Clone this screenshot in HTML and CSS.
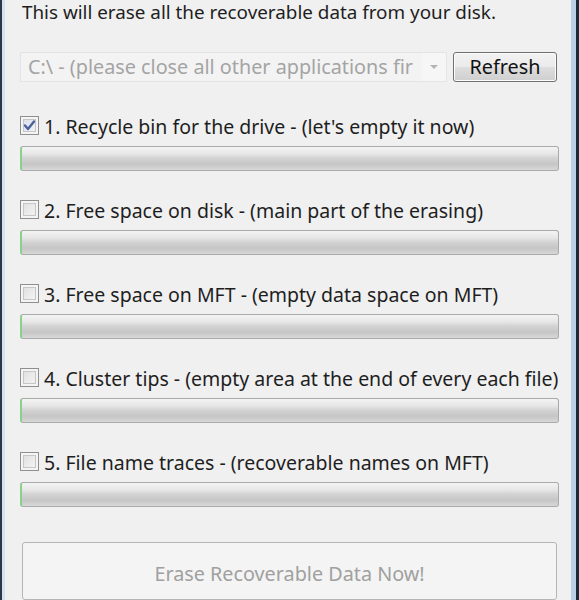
FILE: index.html
```html
<!DOCTYPE html>
<html>
<head>
<meta charset="utf-8">
<link rel="stylesheet" href="styles.css">
</head>
<body>
<div class="window">
  <div class="panel">
    <div class="intro">This will erase all the recoverable data from your disk.</div>
    <div class="drive-row">
      <div class="combo">
        <span class="combo-text">C:\ - (please close all other applications fir</span>
        <span class="combo-btn"><svg width="10" height="6" viewBox="0 0 10 6"><path d="M1 1 L9 1 L5 5 Z" fill="#b4b4b4"/></svg></span>
      </div>
      <div class="btn refresh">Refresh</div>
    </div>
    <div class="steps">
      <div class="step">
        <div class="check-line"><span class="box checked"><svg width="13" height="13" viewBox="0 0 13 13"><path d="M2 6.5 L5 10 L11 2.5" fill="none" stroke="#4b5f9a" stroke-width="2.4" stroke-linecap="round" stroke-linejoin="round"/></svg></span><span class="label">1. Recycle bin for the drive - (let's empty it now)</span></div>
        <div class="progress"></div>
      </div>
      <div class="step">
        <div class="check-line"><span class="box"></span><span class="label">2. Free space on disk - (main part of the erasing)</span></div>
        <div class="progress"></div>
      </div>
      <div class="step">
        <div class="check-line"><span class="box"></span><span class="label">3. Free space on MFT - (empty data space on MFT)</span></div>
        <div class="progress"></div>
      </div>
      <div class="step">
        <div class="check-line"><span class="box"></span><span class="label">4. Cluster tips - (empty area at the end of every each file)</span></div>
        <div class="progress"></div>
      </div>
      <div class="step">
        <div class="check-line"><span class="box"></span><span class="label">5. File name traces - (recoverable names on MFT)</span></div>
        <div class="progress"></div>
      </div>
    </div>
    <div class="btn erase">Erase Recoverable Data Now!</div>
  </div>
</div>
</body>
</html>
```
FILE: styles.css
```css
html, body {
  margin: 0;
  padding: 0;
  background: #f0f0f0;
}
body {
  font-family: "Noto Sans", "Open Sans", "DejaVu Sans", sans-serif;
  font-size: 19.5px;
  color: #1e1e1e;
}
.window {
  width: 579px;
  height: 600px;
  box-sizing: border-box;
  border-left: 2px solid #2a3846;
  border-right: 3px solid #1c2a38;
  overflow: hidden;
}
.panel {
  height: 600px;
  box-sizing: border-box;
  border-left: 3px solid #d3e2f0;
  border-right: 5px solid #b9d0e6;
  background: #f0f0f0;
  padding: 0 11px 0 15px;
  display: flex;
  flex-direction: column;
}
.intro {
  font-size: 18.85px;
  padding-left: 2px;
  line-height: 24px;
  margin-top: 0;
}
.drive-row {
  display: flex;
  gap: 6px;
  margin-top: 28px;
  height: 34px;
  font-size: 19.8px;
}
.combo {
  width: 427px;
  box-sizing: border-box;
  border: 1px solid #e4e4e4;
  background: #f3f3f3;
  display: flex;
  align-items: center;
  color: #a4a4a4;
}
.combo-text {
  flex: 1;
  padding-left: 7px;
  white-space: nowrap;
  overflow: hidden;
}
.combo-btn {
  width: 24px;
  align-self: stretch;
  display: flex;
  align-items: center;
  justify-content: center;
  background: #f6f6f6;
}
.btn {
  box-sizing: border-box;
  border: 1px solid #707070;
  border-radius: 3px;
  display: flex;
  align-items: center;
  justify-content: center;
}
.refresh {
  width: 104px;
  background: linear-gradient(#f2f2f2 0%, #ebebeb 48%, #dddddd 52%, #cfcfcf 100%);
  box-shadow: inset 0 0 0 1px #fcfcfc;
  color: #111;
}
.steps {
  display: flex;
  flex-direction: column;
  margin-top: 34px;
  gap: 29px;
}
.step {
  display: flex;
  flex-direction: column;
  gap: 10px;
}
.check-line {
  display: flex;
  align-items: center;
  height: 20px;
  gap: 5px;
}
.box {
  width: 19px;
  height: 19px;
  box-sizing: border-box;
  border: 1px solid #8e8f8f;
  background: linear-gradient(135deg, #dcdcdc, #f8f8f8);
  box-shadow: inset 0 0 0 2px #f4f4f4, inset 0 0 0 3px #c6c6c6;
  display: flex;
  align-items: center;
  justify-content: center;
  flex: none;
}
.box.checked {
  background: linear-gradient(135deg, #d6dbe6, #f6f7fa);
}
.label {
  white-space: nowrap;
  line-height: 20px;
  position: relative;
  top: 1px;
}
.progress {
  width: 539px;
  height: 25px;
  box-sizing: border-box;
  border: 1px solid #a9a9a9;
  border-left: 2px solid #8ccf8c;
  border-radius: 3px;
  background: linear-gradient(#f4f4f4 0%, #e6e6e6 30%, #d2d2d2 50%, #c6c6c6 75%, #d8d8d8 100%);
}
.erase {
  margin-top: 35px;
  margin-left: 2px;
  width: 535px;
  height: 64px;
  border-color: #b5b5b5;
  background: #f4f4f4;
  color: #a0a0a0;
  align-items: flex-start;
  padding-top: 17px;
  font-size: 19.8px;
}
```
